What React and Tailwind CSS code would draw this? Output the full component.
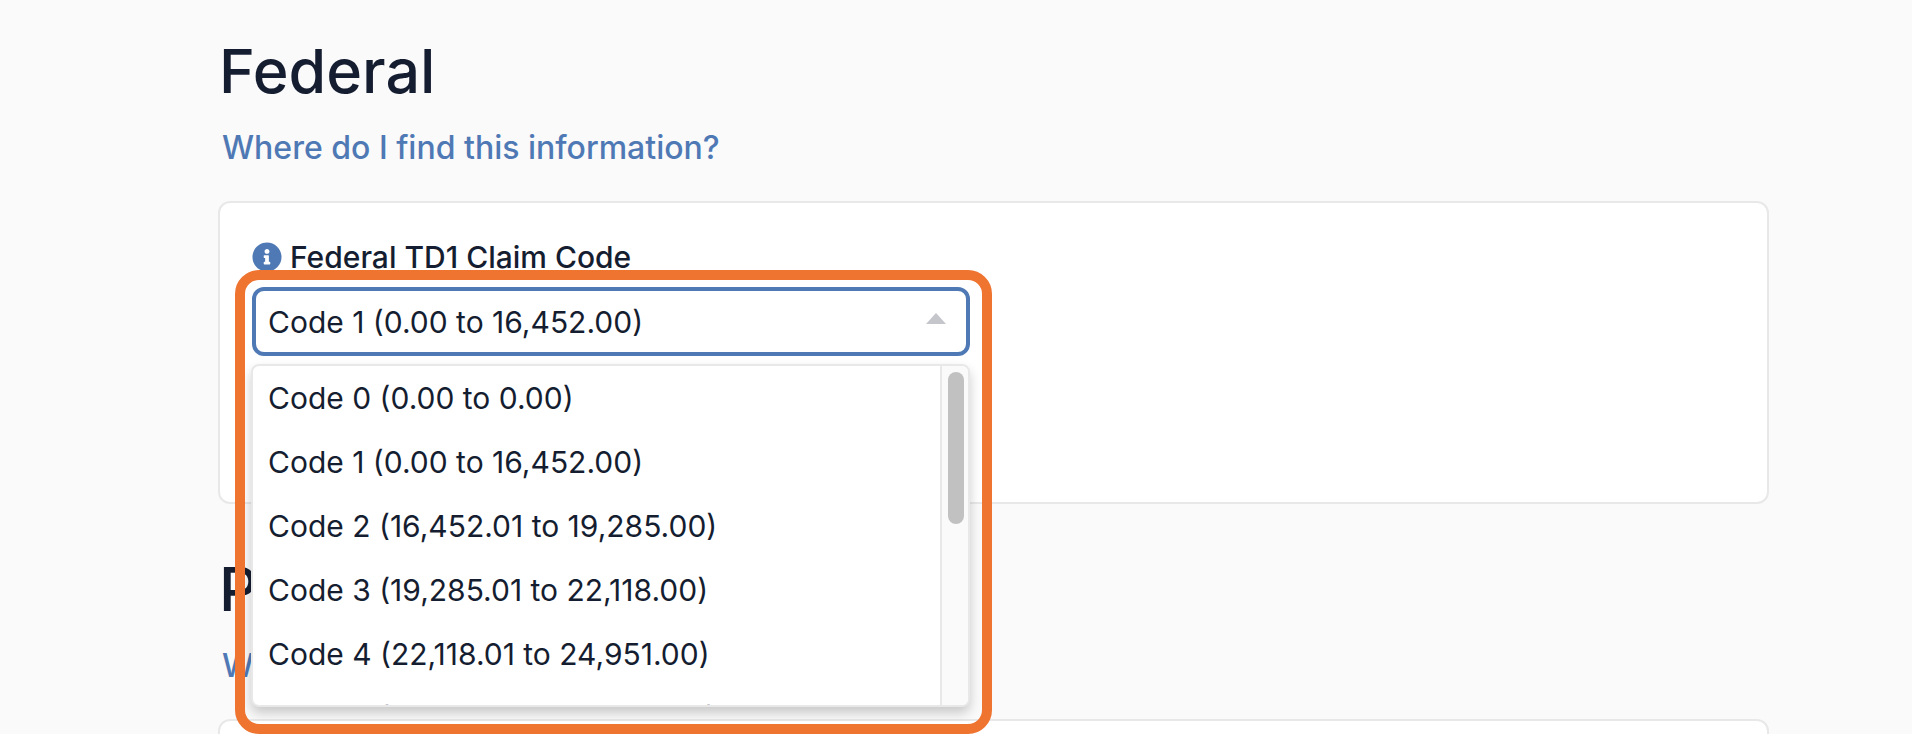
import { FaInfoCircle } from 'react-icons/fa';

const codes = [
  'Code 0 (0.00 to 0.00)',
  'Code 1 (0.00 to 16,452.00)',
  'Code 2 (16,452.01 to 19,285.00)',
  'Code 3 (19,285.01 to 22,118.00)',
  'Code 4 (22,118.01 to 24,951.00)',
  'Code 5 (24,951.01 to 27,784.00)',
];

const SectionHeader = ({ title }) => (
  <>
    <h2 className="pl-px text-[61px] leading-[72px] font-medium">{title}</h2>
    <a href="#" className="block mt-[21px] pl-1 text-[32px] leading-10 font-medium text-[#4f79b5]">
      Where do I find this information?
    </a>
  </>
);

const ClaimCodeSelect = () => (
  <div className="relative mt-3 w-[718px]">
    <div className="flex h-[69px] items-center justify-between rounded-xl border-4 border-[#4f79b5] bg-white pl-3 pr-[20px] pt-px text-[30px]">
      <span>Code 1 (0.00 to 16,452.00)</span>
      <svg className="mb-2 h-[11px] w-5 text-[#c5c6cb]" viewBox="0 0 20 11" fill="currentColor">
        <path d="M10 0 L20 11 L0 11 Z" />
      </svg>
    </div>

    {/* Open list */}
    <div className="absolute -left-px right-0 top-[77px] z-10 flex h-[343px] overflow-hidden rounded-lg border-2 border-[#e8e8e8] bg-white shadow-[0_6px_12px_rgba(0,0,0,0.2)]">
      <ul className="flex-1">
        {codes.map((code) => (
          <li key={code} className="h-16 pl-[15px] text-[30px] leading-16">{code}</li>
        ))}
      </ul>
      <div className="w-[28px] border-l-2 border-[#e8e8e8] bg-[#fafafa] pl-[6px] pt-[6px]">
        <div className="h-[152px] w-4 rounded-full bg-[#c1c1c1]"></div>
      </div>
    </div>

    {/* Highlight frame */}
    <div className="pointer-events-none absolute -left-[17px] -top-[17px] z-20 h-[464px] w-[757px] rounded-[24px] border-[10px] border-[#ee7430]"></div>
  </div>
);

export default function App() {
  return (
    <div className="h-[734px] overflow-hidden bg-[#fafafa] pl-[218px] pr-[143px] pt-[35px] text-[#151d30] font-['Inter',sans-serif]">
      <SectionHeader title="Federal" />
      <div className="mt-[33px] rounded-xl border-2 border-[#e8e8e8] bg-white pb-[146px] pl-8 pt-9">
        <label className="flex items-center gap-2 text-[30px] leading-9 font-medium">
          <FaInfoCircle className="h-[30px] w-[30px] text-[#4f79b5]" />
          Federal TD1 Claim Code
        </label>
        <ClaimCodeSelect />
      </div>

      <div className="mt-[49px]">
        <SectionHeader title="Provincial" />
        <div className="mt-[33px] h-40 rounded-xl border-2 border-[#e8e8e8] bg-white"></div>
      </div>
    </div>
  );
}
